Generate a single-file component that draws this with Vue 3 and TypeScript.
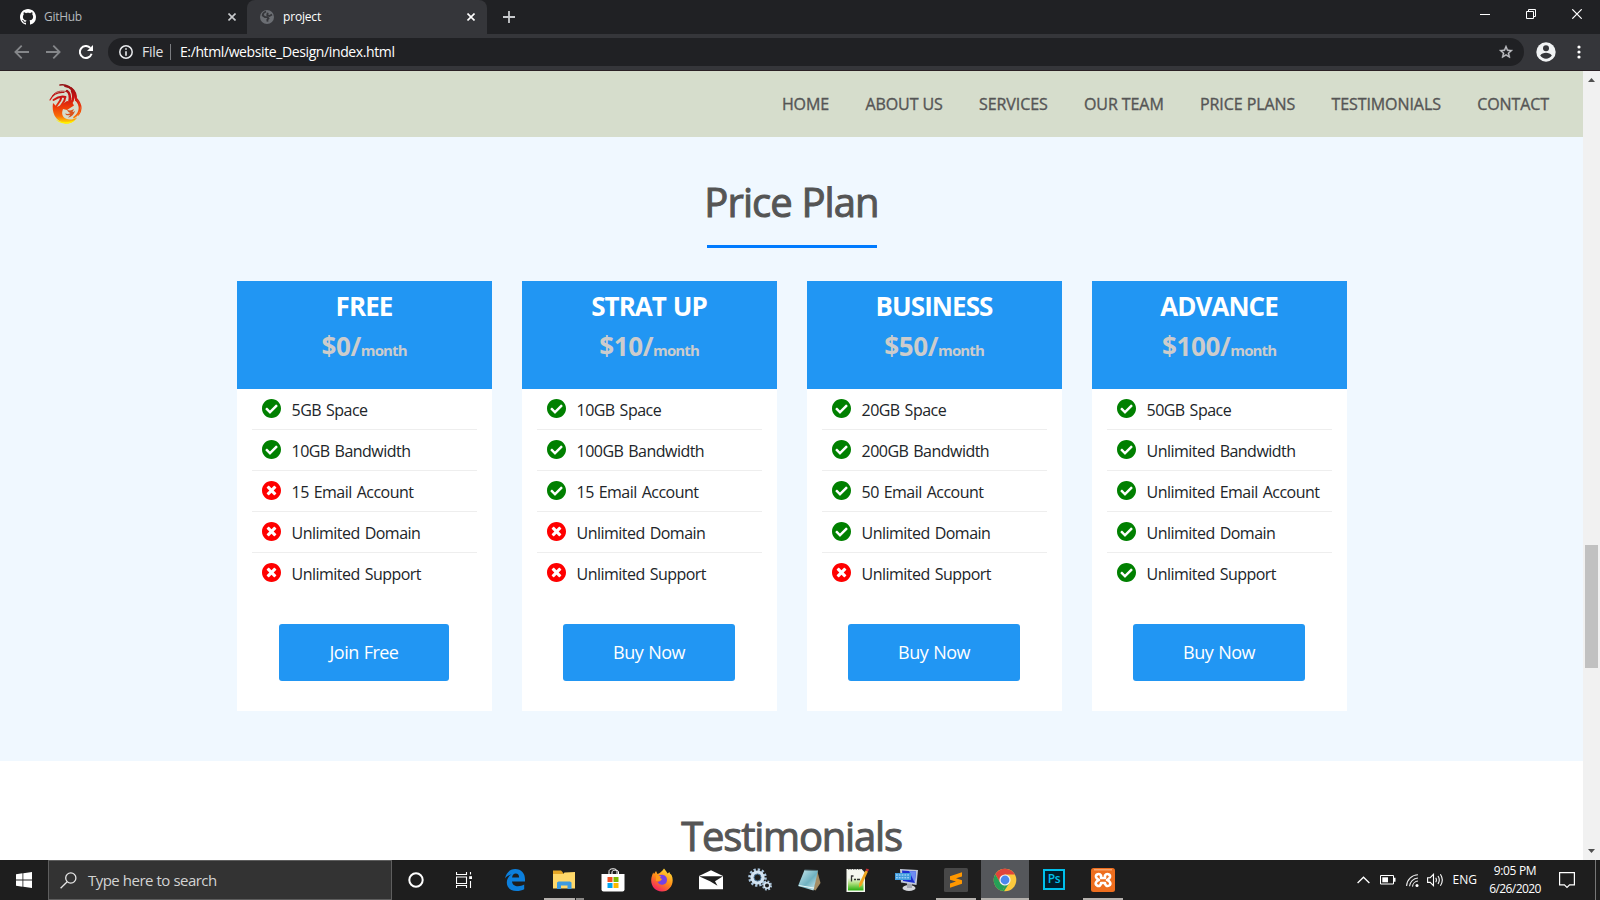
<script setup lang="ts">
interface Feature { label: string; included: boolean }
interface Plan { name: string; price: string; features: Feature[]; action: string }

const navItems: string[] = ['HOME', 'ABOUT US', 'SERVICES', 'OUR TEAM', 'PRICE PLANS', 'TESTIMONIALS', 'CONTACT']

function build(name: string, price: string, labels: string[], included: number, action: string): Plan {
  return { name, price, action, features: labels.map((label, i) => ({ label, included: i < included })) }
}

const plans: Plan[] = [
  build('FREE', '$0/', ['5GB Space', '10GB Bandwidth', '15 Email Account', 'Unlimited Domain', 'Unlimited Support'], 2, 'Join Free'),
  build('STRAT UP', '$10/', ['10GB Space', '100GB Bandwidth', '15 Email Account', 'Unlimited Domain', 'Unlimited Support'], 3, 'Buy Now'),
  build('BUSINESS', '$50/', ['20GB Space', '200GB Bandwidth', '50 Email Account', 'Unlimited Domain', 'Unlimited Support'], 4, 'Buy Now'),
  build('ADVANCE', '$100/', ['50GB Space', 'Unlimited Bandwidth', 'Unlimited Email Account', 'Unlimited Domain', 'Unlimited Support'], 5, 'Buy Now'),
]
</script>

<template>
  <div class="screen">
    <div class="tabstrip">
      <div class="tab idle">
        <svg class="fav" width="16" height="16" viewBox="0 0 16 16"><path fill="#fff" fill-rule="evenodd" d="M8 0C3.58 0 0 3.58 0 8c0 3.54 2.29 6.53 5.47 7.59.4.07.55-.17.55-.38 0-.19-.01-.82-.01-1.49-2.01.37-2.53-.49-2.69-.94-.09-.23-.48-.94-.82-1.13-.28-.15-.68-.52-.01-.53.63-.01 1.08.58 1.23.82.72 1.21 1.87.87 2.33.66.07-.52.28-.87.51-1.07-1.78-.2-3.64-.89-3.64-3.95 0-.87.31-1.59.82-2.15-.08-.2-.36-1.02.08-2.12 0 0 .67-.21 2.2.82.64-.18 1.32-.27 2-.27s1.36.09 2 .27c1.53-1.04 2.2-.82 2.2-.82.44 1.1.16 1.92.08 2.12.51.56.82 1.27.82 2.15 0 3.07-1.87 3.75-3.65 3.95.29.25.54.73.54 1.48 0 1.07-.01 1.93-.01 2.2 0 .21.15.46.55.38A8.01 8.01 0 0 0 16 8c0-4.42-3.58-8-8-8z" /></svg>
        <span class="tab-title">GitHub</span>
        <svg class="close" width="8" height="8" viewBox="0 0 8 8"><path d="M.5.5l7 7M7.5.5l-7 7" stroke="#c9cbcd" stroke-width="1.6" /></svg>
      </div>
      <div class="tab active">
        <svg class="fav" width="14" height="14" viewBox="0 0 14 14"><circle cx="7" cy="7" r="7" fill="#6b6e73" /><path d="M6 1.500c-2 .8-3.300 2.300-3.300 4l2.300 1.500 2.500.2 1 1.300-1.200 1.200.3 1.900M12 4.500L9.500 6 7.200 5l.6-2.300" fill="none" stroke="#35363a" stroke-width="1.800" /></svg>
        <span class="tab-title">project</span>
        <svg class="close" width="8" height="8" viewBox="0 0 8 8"><path d="M.5.5l7 7M7.500.5l-7 7" stroke="#fff" stroke-width="1.600" /></svg>
      </div>
      <svg class="plus" width="12" height="12" viewBox="0 0 12 12"><path d="M6 0v12M0 6h12" stroke="#c8cacd" stroke-width="1.800" /></svg>
      <svg class="wincontrols" width="102" height="10" viewBox="0 0 102 10" fill="none" stroke="#fff"><path d="M0 5.500h10M48.500 2.500V.5h7v7h-2M46.500 2.500h7v7h-7z" /><path d="M92.300.3l9.400 9.400M101.700.3l-9.400 9.400" stroke-width="1.200" /></svg>
    </div>

    <div class="toolbar">
      <svg class="back" width="15" height="14" viewBox="0 0 15 14" fill="none" stroke="#85878a" stroke-width="1.800"><path d="M15 7H1.500M7.700.7L1.400 7l6.300 6.300" /></svg>
      <svg class="forward" width="15" height="14" viewBox="0 0 15 14" fill="none" stroke="#85878a" stroke-width="1.800"><path d="M0 7h13.500M7.300.7L13.600 7l-6.300 6.300" /></svg>
      <svg class="reload" width="14" height="14" viewBox="0 0 14 14"><path d="M12.600 8.800A6 6 0 1 1 11.300 2.900" fill="none" stroke="#fff" stroke-width="2" /><path d="M14 0v6H8z" fill="#fff" /></svg>
      <div class="omnibox">
        <svg width="14" height="14" viewBox="0 0 14 14"><circle cx="7" cy="7" r="6.200" fill="none" stroke="#e8eaed" stroke-width="1.500" /><path d="M7 3.200v1.600M7 6.200v4.600" stroke="#e8eaed" stroke-width="1.600" /></svg>
        <span class="scheme">File</span>
        <span class="url">E:/html/website_Design/index.html</span>
        <svg class="star" width="16" height="16" viewBox="0 0 24 24"><path fill="#c4c6c9" d="M22 9.240l-7.190-.62L12 2 9.190 8.630 2 9.240l5.460 4.730L5.820 21 12 17.270 18.180 21l-1.630-7.030L22 9.240zM12 15.400l-3.760 2.270 1-4.280-3.320-2.880 4.380-.38L12 6.100l1.710 4.040 4.380.38-3.320 2.880 1 4.280L12 15.400z" stroke="#c4c6c9" stroke-width=".6" /></svg>
      </div>
      <svg class="avatar" width="20" height="20" viewBox="0 0 20 20"><circle cx="10" cy="10" r="9.700" fill="#f1f3f4" /><circle cx="10" cy="6.300" r="3" fill="#35363a" /><path d="M4.200 13.600c1-2 3.600-2.800 5.800-2.800s4.800.8 5.800 2.800c-1.200 1.900-3.400 3.200-5.800 3.200s-4.600-1.300-5.800-3.200z" fill="#35363a" /></svg>
      <svg class="dots" width="4" height="14" viewBox="0 0 4 14" fill="#fff"><circle cx="2" cy="2" r="1.600" /><circle cx="2" cy="7" r="1.600" /><circle cx="2" cy="12" r="1.600" /></svg>
    </div>

    <div class="viewport">
      <div class="page">
        <header class="site-header">
          <svg class="logo" width="34" height="42" viewBox="0 0 34 42">
            <defs><linearGradient id="flame" gradientUnits="userSpaceOnUse" x1="0" y1="1" x2="0" y2="41"><stop offset="0" stop-color="#8e1216" /><stop offset=".35" stop-color="#cc1212" /><stop offset=".58" stop-color="#ee3c08" /><stop offset=".8" stop-color="#f86a08" /><stop offset="1" stop-color="#fff200" /></linearGradient></defs>
            <g fill="none" stroke="url(#flame)" stroke-linecap="round">
              <path d="M11 2c6-1 12 2 14 9" stroke-width="1.600" />
              <path d="M16 3c6 1 10 5 10.500 12" stroke-width="2" />
              <path d="M22 5c4 3 5.500 6 5 12" stroke-width="2" />
              <path d="M18 8c3 2 3.500 5 2.500 10M23 8c2 4 2 8-1 12" stroke-width="2.600" />
              <path d="M1 17C4 11 9 9 15 9.500" stroke-width="1.200" />
              <path d="M3.500 12.500C7 8 12 7.500 17 8.500" stroke-width=".8" />
              <path d="M4.500 17c4-3 8-4 12-3M12 15.500c-1 4-4 5-5 9M16 15c0 4-3 5-4 8" stroke-width="2" />
              <path d="M27 17c5 5 5 13-2 17.500" stroke-width="1.800" />
              <path d="M28 16c5 6 4.500 12 1.500 16" stroke-width="1.200" />
            </g>
            <path d="M4 20c-1.500 9 2 18 12 20.500 6 .5 10-2.500 12-6-5 3-11 2.500-13.500-.5-2-2.500-1.500-5.500-.5-8l4 1 7-4.500L23 19l-5-1-6 4-4 2z" fill="url(#flame)" />
            <path d="M18 26.500c2 1.300 4.500 1.300 7-.5l-1.500 3c1 0 1.500-.5 2.500-1-1 3-3 6-7 6.500 1-1 2-1.500 2-2.500-2 .5-4 .5-5-1.500 2 .8 4 .6 5.500-.5-1.800-.4-3-1.500-3.500-3.500z" fill="#d9541e" />
            <path d="M6 36c4 3 12 5 20 1-4 4.500-14 5.500-20-1z" fill="#fff200" />
          </svg>
          <nav class="nav"><a v-for="item in navItems" :key="item">{{ item }}</a></nav>
        </header>

        <section class="pricing">
          <h2 class="title">Price Plan</h2>
          <div class="rule"></div>
          <div class="cards">
            <article v-for="plan in plans" :key="plan.name" class="card">
              <div class="card-head">
                <h3>{{ plan.name }}</h3>
                <p class="price">{{ plan.price }}<small>month</small></p>
              </div>
              <ul>
                <li v-for="feature in plan.features" :key="feature.label">
                  <svg width="19" height="19" viewBox="8 8 496 496">
                    <path v-if="feature.included" fill="#008000" d="M504 256c0 136.967-111.033 248-248 248S8 392.967 8 256 119.033 8 256 8s248 111.033 248 248zM227.314 387.314l184-184c6.248-6.248 6.248-16.379 0-22.627l-22.627-22.627c-6.248-6.249-16.379-6.249-22.628 0L216 308.118l-70.059-70.059c-6.248-6.248-16.379-6.248-22.628 0l-22.627 22.627c-6.248 6.248-6.248 16.379 0 22.627l104 104c6.249 6.249 16.379 6.249 22.628.001z" />
                    <path v-else fill="#f00" d="M256 8C119 8 8 119 8 256s111 248 248 248 248-111 248-248S393 8 256 8zm121.600 313.100c4.700 4.700 4.700 12.300 0 17L338 377.600c-4.700 4.700-12.300 4.700-17 0L256 312l-65.100 65.600c-4.700 4.700-12.300 4.700-17 0L134.400 338c-4.700-4.700-4.700-12.300 0-17l65.600-65-65.600-65.100c-4.700-4.700-4.700-12.300 0-17l39.600-39.600c4.700-4.700 12.300-4.700 17 0l65 65.700 65.100-65.600c4.700-4.700 12.300-4.700 17 0l39.600 39.600c4.700 4.700 4.700 12.300 0 17L312 256l65.600 65.100z" />
                  </svg>
                  <span>{{ feature.label }}</span>
                </li>
              </ul>
              <button :class="{ join: plan.action === 'Join Free' }">{{ plan.action }}</button>
            </article>
          </div>
        </section>

        <section class="testimonials"><h2 class="title wide">Testimonials</h2></section>
      </div>
      <div class="scrollbar">
        <svg width="7" height="4" viewBox="0 0 7 4"><path d="M3.500 0L7 4H0z" fill="#505050" /></svg>
        <div class="thumb"></div>
        <svg width="7" height="4" viewBox="0 0 7 4"><path d="M0 0h7L3.500 4z" fill="#505050" /></svg>
      </div>
    </div>

    <div class="taskbar">
      <div class="start"><svg width="16" height="16" viewBox="0 0 16 16" fill="#fff"><path d="M0 2.200l6.500-.9v6.200H0zM7.300 1.200L16 0v7.500H7.300zM0 8.400h6.500v6.300L0 13.800zM7.300 8.400H16V16l-8.700-1.200z" /></svg></div>
      <div class="search">
        <svg width="17" height="17" viewBox="0 0 17 17" fill="none" stroke="#e6e6e6" stroke-width="1.300"><circle cx="10.800" cy="6" r="5.100" /><path d="M7.200 9.800L.6 16.300" /></svg>
        <span>Type here to search</span>
      </div>
      <div class="sys"><svg width="16" height="16" viewBox="0 0 16 16"><circle cx="8" cy="8" r="6.700" fill="none" stroke="#fff" stroke-width="2" /></svg></div>
      <div class="sys"><svg width="16" height="16" viewBox="0 0 16 16" fill="none" stroke="#fff"><path d="M.5 0v2.500h10V0M.5 5h10v6.500H.5zM.5 16v-2.500h10V16M14.500 0v2.500M14.500 9v7" stroke-width="1.100" /><path d="M13.200 4.200h2.800v2.800h-2.800z" fill="#fff" stroke="none" /></svg></div>

      <div class="apps">
        <div class="app"><svg width="24" height="24" viewBox="0 0 24 24"><path fill="#0c7fdc" d="M2 10.500C3.200 4.600 7 1 12.200 1 18.400 1 22 5.300 22 11.200v2.300H9c.3 3.200 2.800 4.700 6 4.700 2.300 0 4.300-.6 6.200-1.700v4.700c-2.100 1.200-4.700 1.800-7.500 1.800C7.500 23 3.800 19.400 3.800 14.500c0-3.500 1.700-6.500 4.900-8.300C5.800 6.900 3.700 8.300 2 10.500zM9.100 9.600h7c0-2.500-1.200-4-3.300-4S9.400 7.200 9.100 9.600z" /></svg></div>
        <div class="app running split"><svg width="24" height="24" viewBox="0 0 24 24"><path d="M1 4V2.500h8l2 2V20H1z" fill="#e6a726" /><path d="M1 6h10l1.500-1.500L23 4v16.500H1z" fill="#ffd869" /><path d="M5 21v-6.500l1.500-1H18l1.500 1V21h-4v-3.500H9V21z" fill="#3b9ae0" /></svg></div>
        <div class="app"><svg width="24" height="24" viewBox="0 0 24 24"><path d="M8 7V3.500C8 1.500 9.500.8 12 .8s4 .7 4 2.700V7M11 7V4c0-2 5-2.500 6.500-.5V7" fill="none" stroke="#fff" /><path d="M.5 6h23v15.500a2 2 0 0 1-2 2h-19a2 2 0 0 1-2-2z" fill="#fff" /><path d="M6.500 9h5v5h-5z" fill="#f25022" /><path d="M12.500 9h5v5h-5z" fill="#7fba00" /><path d="M6.500 15h5v5h-5z" fill="#00a4ef" /><path d="M12.500 15h5v5h-5z" fill="#ffb900" /></svg></div>
        <div class="app"><svg width="24" height="24" viewBox="0 0 24 24"><defs><linearGradient id="fox" x1=".8" y1="0" x2=".2" y2="1"><stop offset="0" stop-color="#ffe23a" /><stop offset=".5" stop-color="#ff8a16" /><stop offset="1" stop-color="#f5156c" /></linearGradient></defs><path d="M14 .5c1 1.500 2.500 2.500 3.500 5l2-1.500c0 1.500 1 2 2 3 3.500 7-1 16.500-9.500 16.500S-1 15 2.200 7l1-2.500.8 1.500L6 3l1.500 3C10 5 12 3.500 14 .5z" fill="url(#fox)" /><path d="M9 7.500c4-2 8 .5 8 4.500a5 5 0 0 1-9.500 2c2 0 2.500-1.500 4-2-2-1-4-1-4.500-2z" fill="#7542e5" /><path d="M6 7c2 .5 3 1 5 1l-1 2 2 1c-1 2-3.500 2-6 2z" fill="#ff9b19" /></svg></div>
        <div class="app"><svg width="24" height="24" viewBox="0 0 24 24"><path d="M0 8l12-5.800L24 8v13.200H0z" fill="#fff" /><path d="M0 8.200h24l-8 5 2.500 4.500L11 13.200z" fill="#1e1e1e" /></svg></div>
        <div class="app"><svg width="26" height="24" viewBox="0 0 26 24" fill="none"><circle cx="10.500" cy="9.500" r="7.300" stroke="#a9c4dc" stroke-width="4" stroke-dasharray="2.100 1.720" /><circle cx="10.500" cy="9.500" r="5.400" stroke="#d3e3f1" stroke-width="3.400" /><circle cx="10.500" cy="9.500" r="3.500" stroke="#5a8fbb" stroke-width=".8" /><circle cx="20" cy="17.500" r="3.800" stroke="#a9c2d8" stroke-width="2.500" stroke-dasharray="1.700 1.280" /><circle cx="20" cy="17.500" r="2.800" stroke="#d7e5f0" stroke-width="1.600" /></svg></div>
        <div class="app"><svg width="24" height="24" viewBox="0 0 24 24"><defs><linearGradient id="pad" x1="0" y1="0" x2="1" y2="1"><stop offset="0" stop-color="#cdeaf0" /><stop offset=".55" stop-color="#6fb1c0" /><stop offset="1" stop-color="#e2f6f8" /></linearGradient></defs><path d="M20 2l3.500 13-5 7.500-2-1z" fill="#a58d64" /><path d="M7.500 2L21 2.500 16.500 22.500 1 18z" fill="url(#pad)" /><path d="M2 17.500l15 2.500" stroke="#eafafa" /><path d="M7.500 2L21 2.500" stroke="#546f76" /></svg></div>
        <div class="app"><svg width="24" height="24" viewBox="0 0 24 24"><defs><linearGradient id="npp" x1="0" y1="0" x2="0" y2="1"><stop offset=".35" stop-color="#f6f8f0" /><stop offset=".65" stop-color="#a9dd78" /><stop offset=".95" stop-color="#38b51c" /></linearGradient></defs><path d="M.5 1h15l3.500 3.500V24H.5z" fill="#f5f7ef" /><path d="M2 3h13l2.500 3v16.500H2z" fill="url(#npp)" /><path d="M2 1.500h13" stroke="#919191" stroke-dasharray="1.500 1" /><path d="M5.500 7.500v6M5 8h2.500M8 11.500h2M11 11.500h3" stroke="#333" stroke-width="1.300" /><path d="M19.500 2.500l2.500 1-6.500 14-2.500 2v-3.500z" fill="#f0a51e" /><path d="M19.500 2.500l1-2 2.500 1-1 2z" fill="#c62d32" /></svg></div>
        <div class="app"><svg width="24" height="24" viewBox="0 0 24 24"><ellipse cx="14" cy="20" rx="6.500" ry="3" fill="#d5d7dc" /><path d="M12 15h5v5h-5z" fill="#a5a8b1" /><path d="M5 1l18 1-1.500 15L6 14.500z" fill="#c2c9da" /><path d="M7 2.500l14 1-1.200 11.500L8 13z" fill="#1d2ed0" /><path d="M14 3l7 .5-1.200 11.500z" fill="#6d8cf3" /><path d="M0 5h16v7H0z" fill="#419cdd" /><path d="M1 7h14M1 9.800h14" stroke="#c5e6ff" stroke-dasharray="1.800 1" /></svg></div>
        <div class="app running"><svg width="24" height="24" viewBox="0 0 24 24"><rect width="24" height="24" rx="1.500" fill="#484848" /><path d="M6 8.200l12-4v4.300L12 10.300l6 2v3.500l-12 4v-4.300l6-1.900-6-1.800z" fill="#ff9800" /></svg></div>
        <div class="app running current"><svg width="24" height="24" viewBox="0 0 24 24"><circle cx="12" cy="12" r="11.300" fill="#fbc93d" /><path d="M2.300 6.200A11.300 11.300 0 0 1 21.800 6.500H12l-5 8z" fill="#e0443a" /><path d="M2.300 6.200l5.200 9L12 17.300l-2.500 5.800A11.300 11.300 0 0 1 2.300 6.200z" fill="#269f57" /><path d="M16.500 14.800L11 23.200l-1.500-.2 2.500-6z" fill="#269f57" /><circle cx="12" cy="12" r="5.600" fill="#f4f4f4" /><circle cx="12" cy="12" r="4.400" fill="#4b87ed" /></svg></div>
        <div class="app"><div class="ps">Ps</div></div>
        <div class="app running"><svg width="24" height="24" viewBox="0 0 24 24"><rect width="24" height="24" rx="2.500" fill="#ee6e1e" /><rect x="3" y="1" width="18" height="1.500" fill="#f8a46b" /><path d="M10 7.500C8.500 5 4.500 6 5 9c.3 1.500 1.500 2 3 3-3 .8-4.500 4-2 5.500 2.300 1.300 4-.2 4-2.500h4c0 2.300 2 3.800 4.200 2.500 2.300-1.500.8-4.700-2.200-5.500 1.500-1 2.700-1.500 3-3 .5-3-3.500-4-5-1.500V10h-4z" fill="none" stroke="#fff" stroke-width="2.600" stroke-linejoin="round" /></svg></div>
      </div>

      <div class="tray">
        <svg class="chev" width="13" height="8" viewBox="0 0 13 8" fill="none" stroke="#fff" stroke-width="1.300"><path d="M.6 7l5.900-5.800L12.400 7" /></svg>
        <svg class="battery" width="16" height="10" viewBox="0 0 16 10"><path d="M.5.500h13v8.500H.5z" fill="none" stroke="#fff" /><path d="M2.300 2.300h5.700v5H2.300z" fill="#fff" /><path d="M14 2.800h1.500v4H14z" fill="#fff" /></svg>
        <svg class="wifi" width="13" height="13" viewBox="0 0 13 13" fill="none" stroke="#e9e9e9" stroke-width="1.100"><path d="M.6 12A11.500 11.500 0 0 1 12 .8M3.500 12.300A9 9 0 0 1 12 4M6.500 12.600A6 6 0 0 1 12 7" /><circle cx="11" cy="11.400" r="1.500" fill="#fff" stroke="none" /></svg>
        <svg class="volume" width="17" height="14" viewBox="0 0 17 14" fill="none" stroke="#fff" stroke-width="1.100"><path d="M.6 4.700h2.600L6.500 1.300v11.400L3.200 9.400H.6zM8.700 4.800q1.400 2.200 0 4.400M11 3q2.600 4 0 8M13.400 1.200q3.800 5.800 0 11.600" /></svg>
        <span class="lang">ENG</span>
        <div class="clock"><span class="time">9:05 PM</span><span class="date">6/26/2020</span></div>
        <svg class="notice" width="16" height="17" viewBox="0 0 16 17" fill="none" stroke="#fff" stroke-width="1.200"><path d="M.6.600h14.800v12.200h-4.800L8 15.400l-2.600-2.600H.6z" /></svg>
        <div class="peek"></div>
      </div>
    </div>
  </div>
</template>

<style>
html, body { margin: 0; overflow: hidden; }
</style>

<style scoped>
* { box-sizing: border-box; }
.screen { width: 1600px; height: 900px; display: flex; flex-direction: column; overflow: hidden; background: #fff; font-family: "Open Sans", "Noto Sans", sans-serif; white-space: nowrap; }
svg { display: block; flex: none; }

.tabstrip { height: 34px; flex: none; background: #202124; display: flex; align-items: center; }
.tab { height: 34px; display: flex; align-items: center; font-size: 12px; }
.tab-title { padding-bottom: 1px; }
.tab .close { margin-left: auto; }
.idle { width: 247px; padding: 0 11px 0 20px; color: #b5b9bd; letter-spacing: -.3px; border-bottom-right-radius: 8px; }
.idle .tab-title { margin-left: 8px; }
.active { width: 240px; padding: 0 12px 0 13px; color: #fff; letter-spacing: -.18px; background: #35363a; border-radius: 8px 8px 0 0; }
.active .tab-title { margin-left: 9px; }
.plus { margin-left: 16px; }
.wincontrols { margin: -6px 18px 0 auto; }

.toolbar { height: 37px; flex: none; background: #35363a; border-bottom: 1px solid #2a2025; display: flex; align-items: center; padding-left: 14px; }
.forward { margin-left: 17px; }
.reload { margin-left: 18px; }
.omnibox { width: 1416px; height: 28px; margin-left: 15px; border-radius: 14px; background: #202124; display: flex; align-items: center; padding: 0 10px 0 11px; font-size: 14px; }
.scheme { margin-left: 9px; padding-right: 7px; color: #e0e2e4; line-height: 16px; letter-spacing: -.3px; border-right: 1px solid #7a7c80; }
.url { margin-left: 9px; color: #fff; letter-spacing: -.39px; line-height: 16px; }
.star { margin-left: auto; }
.avatar { margin-left: 12px; }
.dots { margin-left: 21px; }

.viewport { height: 789px; flex: none; display: flex; overflow: hidden; }
.page { width: 1583px; height: 789px; overflow: hidden; }
.site-header { height: 66px; background: #d6ddcc; display: flex; align-items: center; justify-content: space-between; padding: 0 34px 0 49px; }
.nav { display: flex; gap: 36.3px; font-size: 16px; color: #555; line-height: 24px; letter-spacing: -.08px; -webkit-text-stroke: .35px #555; }

.pricing { height: 624px; background: #f0f8ff; padding-top: 36px; }
.title { margin: 0; text-align: center; font-size: 40px; font-weight: 400; line-height: 58px; color: #555; letter-spacing: -.9px; -webkit-text-stroke: 1px #555; }
.wide { letter-spacing: -1.200px; }
.rule { width: 170px; height: 3px; margin: 14px auto 33px; background: #007bff; }
.cards { display: flex; gap: 30px; justify-content: center; }
.card { width: 255px; height: 430px; background: #fff; display: flex; flex-direction: column; align-items: center; }
.card-head { width: 255px; height: 108px; background: #2196f3; text-align: center; font-weight: 700; font-size: 26px; color: #fff; padding-top: 6px; }
.card-head h3 { margin: 0 0 1px; font-size: 26px; line-height: 38px; letter-spacing: -.95px; word-spacing: 1px; }
.price { margin: 0; line-height: 40px; color: #ccc; letter-spacing: -.35px; }
.price small { font-size: 15px; letter-spacing: -.9px; }
ul { list-style: none; margin: 0; padding: 0; width: 225px; }
li { height: 41px; border-bottom: 1px solid #eee; display: flex; padding-left: 10px; }
li:last-child { border-bottom-color: transparent; }
li svg { margin-top: 10px; }
li span { margin-left: 11px; padding-top: 9px; line-height: 24px; font-size: 16px; letter-spacing: -.52px; word-spacing: 1.300px; color: #212529; }
button { width: 172px; height: 57px; margin-top: 30px; border: 0; border-radius: 3px; background: #2196f3; color: #fff; font-family: inherit; font-size: 18px; letter-spacing: -.55px; word-spacing: 1px; padding: 0 0 2px; }
.join { width: 170px; }
.testimonials { padding-top: 50px; }
.testimonials .title { line-height: 49px; }

.scrollbar { width: 17px; background: #f1f1f1; display: flex; flex-direction: column; align-items: center; padding: 7px 0; }
.thumb { width: 13px; height: 123px; margin: 463px 0 auto; background: #c1c1c1; }

.taskbar { height: 40px; flex: none; background: #1e1e1e; display: flex; }
.start, .sys { width: 48px; display: flex; align-items: center; justify-content: center; }
.search { width: 344px; height: 40px; border: 1px solid #5e5e5e; background: #333; display: flex; align-items: center; padding-left: 11px; color: #d3d3d3; font-size: 15px; letter-spacing: -.54px; word-spacing: .3px; }
.search span { margin-left: 11px; }
.apps { display: flex; gap: 1px; margin-left: 3px; }
.app { width: 48px; height: 40px; display: flex; align-items: center; justify-content: center; border: solid transparent; border-width: 2px 0; }
.running { border-bottom-color: #b5b1ad; width: 40px; margin: 0 4px; }
.split { border-image: linear-gradient(to right, #b5b1ad 31px, #1e1e1e 31px, #1e1e1e 32px, #8a8886 32px) 0 0 2 0; }
.current { width: 48px; margin: 0; background: #55575b; border-top-color: #55575b; }
.ps { width: 22px; height: 21px; border: 2px solid #00c0ec; background: #001d2b; color: #00c0ec; font-size: 12px; font-weight: 600; line-height: 16px; text-align: center; letter-spacing: -.3px; margin-top: -2px; }
.tray { margin-left: auto; display: flex; align-items: center; color: #fff; font-size: 12px; }
.battery { margin-left: 10px; }
.wifi { margin-left: 10px; }
.volume { margin-left: 8px; }
.lang { margin-left: 9px; padding-bottom: 1px; }
.clock { width: 54px; margin-left: 11px; display: flex; flex-direction: column; align-items: center; line-height: 18px; letter-spacing: -.6px; }
.time { letter-spacing: -.35px; }
.notice { margin-left: 17px; }
.peek { width: 1px; height: 40px; background: #777; margin: 0 4px 0 20px; }
</style>
